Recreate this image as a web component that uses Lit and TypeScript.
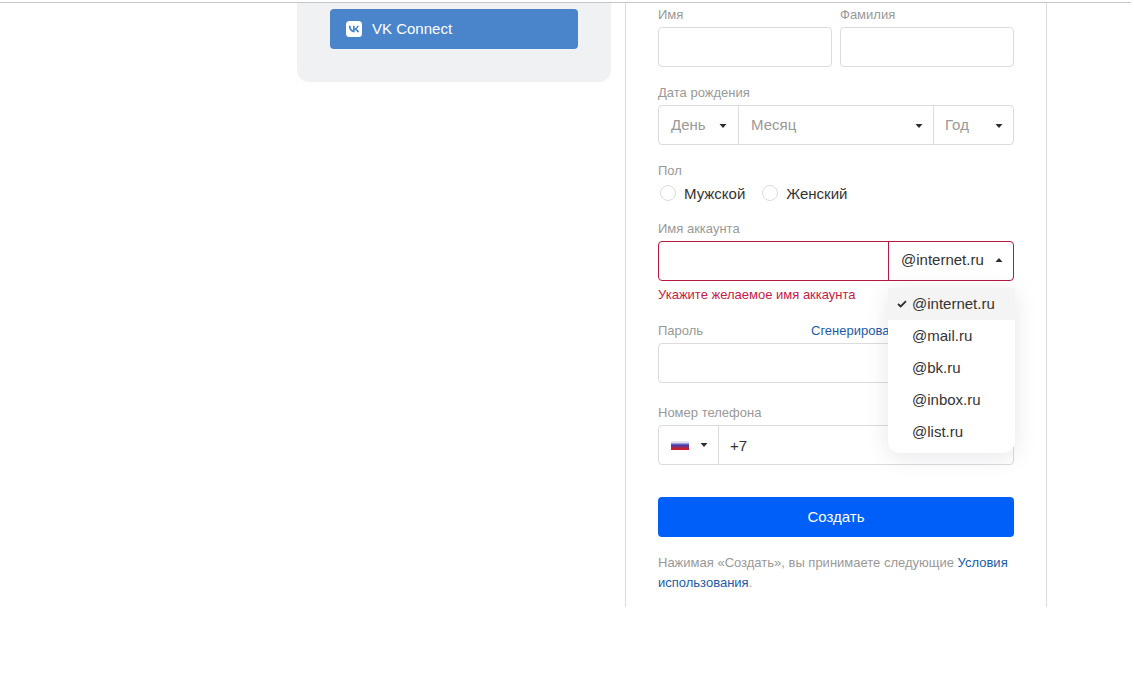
import { LitElement, html, css } from "lit";
import { customElement } from "lit/decorators.js";

const caret = (up = false) => html`<svg class="caret" width="8" height="6" viewBox="0 0 8 6">
  <path d="${up ? "M4 1 L7.500 5 H0.500 Z" : "M0.500 1 H7.500 L4 5 Z"}" fill="#2c2d2e"></path></svg>`;

@customElement("app-root")
export class AppRoot extends LitElement {
  static styles = css`
    :host {
      display: block;
      width: 1134px;
      height: 677px;
      overflow: hidden;
      background: #fff;
      font-family: "Liberation Sans", Arial, sans-serif;
      color: #333;
    }
    .topline { height: 1px; margin-top: 2px; width: 1131px; background: #c4c6c9; }
    .page { display: flex; align-items: flex-start; padding-left: 297px; }
    .side {
      width: 314px; height: 79px; box-sizing: border-box;
      padding: 6px 33px 0; background: #eff1f3;
      border-radius: 0 0 12px 12px; margin-right: 14px;
    }
    .vk {
      height: 40px; width: 248px; box-sizing: border-box; border-radius: 4px;
      background: #4a85cc; color: #fff; font-size: 15px;
      display: flex; align-items: center; gap: 10px; padding: 0 0 2px 16px;
    }
    .vk svg { margin-top: 2px; }
    .form {
      width: 422px; height: 604px; box-sizing: border-box;
      border-left: 1px solid #dcdcdc; border-right: 1px solid #dcdcdc;
      padding: 3px 32px 0;
    }
    .label { font-size: 13px; line-height: 18px; color: #999; }
    .row { display: flex; gap: 8px; }
    .col { flex: 1; min-width: 0; }
    .f-name, .f-date { margin-bottom: 17px; }
    .f-sex { margin-bottom: 14px; }
    .f-account { margin-bottom: 18px; position: relative; }
    .f-pass { margin-bottom: 21px; }
    .labelbar { display: flex; justify-content: space-between; }
    .gen { font-size: 13px; line-height: 18px; color: #1a5ca8; width: 203px; white-space: nowrap; overflow: hidden; }
    .input {
      height: 40px; box-sizing: border-box; margin-top: 3px;
      border: 1px solid #dcdcdc; border-radius: 4px; background: #fff;
      display: flex; font-size: 15px; align-items: stretch;
    }
    .seg {
      display: flex; align-items: center; justify-content: space-between;
      box-sizing: border-box; color: #999; padding: 0 10px 2px 12px;
    }
    .seg .caret { margin-top: 3px; }
    .seg + .seg { border-left: 1px solid #dcdcdc; }
    .day { width: 79px; padding-right: 11px; }
    .month { width: 195px; }
    .year { flex: 1; padding-left: 11px; }
    .radios { display: flex; gap: 15px; align-items: center; font-size: 15px; height: 26px; }
    .radio { display: flex; align-items: center; gap: 8px; padding-left: 2px; }
    .dot { width: 14px; height: 14px; border: 1px solid #dcdcdc; border-radius: 50%; }
    .err { border-color: #b5193f; }
    .acc-input { flex: 1; }
    .acc-select {
      width: 125px; box-sizing: border-box; border-left: 1px solid #b5193f;
      display: flex; align-items: center; justify-content: space-between;
      padding: 0 10px 3px 12px;
    }
    .errtext { font-size: 13px; line-height: 18px; color: #c61a47; margin-top: 5px; white-space: nowrap; }
    .menu {
      position: absolute; left: 230px; top: 68px; width: 127px; box-sizing: border-box;
      background: #fff; border-radius: 0 0 12px 12px; padding-bottom: 5px;
      box-shadow: 0 4px 24px rgba(0, 16, 61, 0.1);
      font-size: 15px;
    }
    .item { height: 32px; box-sizing: border-box; display: flex; align-items: center; padding: 0 0 2px 24px; position: relative; }
    .item.on { background: #f5f4f5; }
    .check { position: absolute; left: 9px; top: 12px; }
    .seg.flagseg { width: 59px; padding: 0 10px 0 12px; }
    .seg.flagseg .caret { margin-top: 0; }
    .flag {
      width: 18px; height: 9px;
      background: linear-gradient(#e6e6f2 0 15%, #3d3db4 45%, #c8202f 85%);
    }
    .phone { display: flex; align-items: center; padding-left: 11px; border-left: 1px solid #dcdcdc; flex: 1; }
    .create {
      height: 40px; box-sizing: border-box; padding-bottom: 2px; margin-top: 32px; border-radius: 4px; background: #005ff9;
      color: #fff; font-size: 15px; display: flex; align-items: center; justify-content: center;
    }
    .terms { font-size: 13px; line-height: 20px; color: #999; margin-top: 16px; }
    .terms a { color: #1a5ca8; }
  `;

  render() {
    return html`
      <div class="topline"></div>
      <div class="page">
        <div class="side">
          <div class="vk">
            <svg width="16" height="16" viewBox="0 0 16 16">
              <rect width="16" height="16" rx="3.500" fill="#fff"></rect>
              <path d="M8.500 11.300C4.900 11.300 2.900 8.900 2.800 4.800H4.600C4.700 7.800 6 9 7 9.300V4.800H8.700V7.400C9.700 7.300 10.800 6.100 11.200 4.800H12.900C12.600 6.400 11.400 7.600 10.600 8.100C11.400 8.500 12.700 9.500 13.200 11.300H11.300C10.900 10.100 9.900 9.100 8.700 9V11.300Z" fill="#4a85cc"></path>
            </svg>
            VK Connect
          </div>
        </div>
        <div class="form">
          <div class="f-name row">
            <div class="col"><div class="label">Имя</div><div class="input"></div></div>
            <div class="col"><div class="label">Фамилия</div><div class="input"></div></div>
          </div>
          <div class="f-date">
            <div class="label">Дата рождения</div>
            <div class="input">
              <div class="seg day">День ${caret()}</div>
              <div class="seg month">Месяц ${caret()}</div>
              <div class="seg year">Год ${caret()}</div>
            </div>
          </div>
          <div class="f-sex">
            <div class="label">Пол</div>
            <div class="radios">
              <div class="radio"><span class="dot"></span>Мужской</div>
              <div class="radio"><span class="dot"></span>Женский</div>
            </div>
          </div>
          <div class="f-account">
            <div class="label">Имя аккаунта</div>
            <div class="input err">
              <div class="acc-input"></div>
              <div class="acc-select">@internet.ru ${caret(true)}</div>
            </div>
            <div class="errtext">Укажите желаемое имя аккаунта</div>
            <div class="menu">
              <div class="item on">
                <svg class="check" width="10" height="8" viewBox="0 0 10 8"><path d="M1 4 L3.700 6.500 L9 1.200" fill="none" stroke="#2c2d2e" stroke-width="1.800"></path></svg>
                @internet.ru
              </div>
              <div class="item">@mail.ru</div>
              <div class="item">@bk.ru</div>
              <div class="item">@inbox.ru</div>
              <div class="item">@list.ru</div>
            </div>
          </div>
          <div class="f-pass">
            <div class="labelbar"><div class="label">Пароль</div><div class="gen">Сгенерировать</div></div>
            <div class="input"></div>
          </div>
          <div>
            <div class="label">Номер телефона</div>
            <div class="input">
              <div class="seg flagseg">
                <span class="flag"></span>
                ${caret()}
              </div>
              <div class="phone">+7</div>
            </div>
          </div>
          <div class="create">Создать</div>
          <div class="terms">Нажимая «Создать», вы принимаете следующие <a>Условия использования</a>.</div>
        </div>
      </div>
    `;
  }
}
